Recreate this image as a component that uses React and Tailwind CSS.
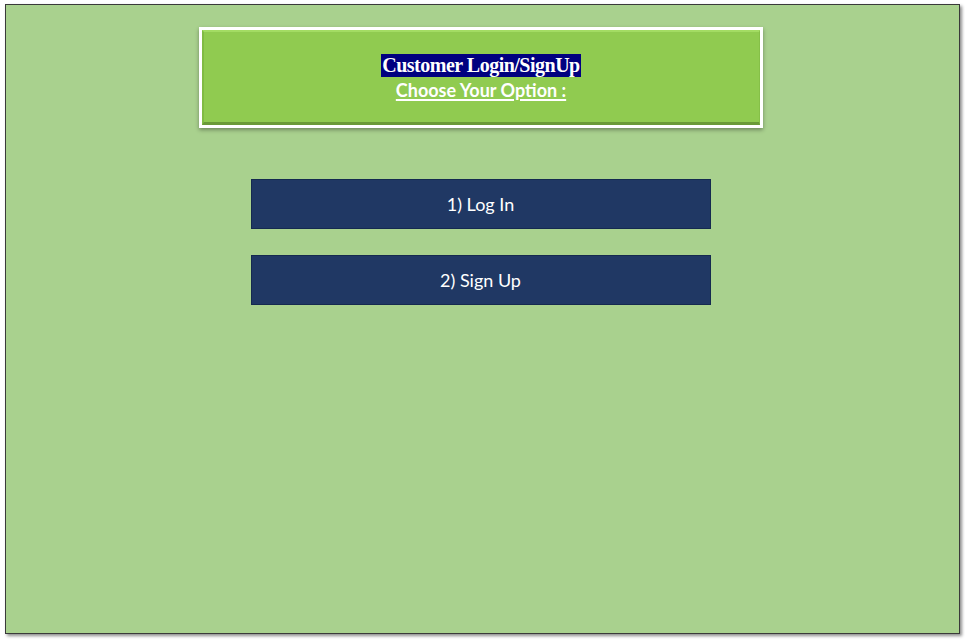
export default function App() {
  return (
    <div className="w-[965px] h-[640px] bg-white pt-[4px] pl-[5px]">
      <div className="w-[955px] h-[630px] bg-[#a9d18e] border border-[#3a3a3a] shadow-[2px_2px_3px_rgba(0,0,0,0.45)] flex flex-col items-center pr-[4px]">
        <div className="mt-[22px] w-[564px] h-[101px] border-[3px] border-white bg-white shadow-[0_2px_4px_rgba(0,0,0,0.35)]">
          <div className="h-full w-full bg-[#90cb50] border-t-[2px] border-t-[#a3dc63] border-l-[2px] border-l-[#80bb43] border-r border-r-[#86c048] border-b-[3px] border-b-[#6a9a38] flex flex-col items-center pt-[22px]">
            <span
              className="bg-[#000080] text-white font-bold text-[20px] leading-[23px] px-[1px] tracking-[-0.5px]"
              style={{ fontFamily: '"Liberation Serif", serif' }}
            >
              Customer Login/SignUp
            </span>
            <span
              className="mt-[2px] text-white font-bold text-[18px] leading-[22px] underline underline-offset-2 decoration-[1.5px]"
              style={{ fontFamily: 'Lato, "Open Sans", sans-serif' }}
            >
              Choose Your Option :
            </span>
          </div>
        </div>

        <div className="mt-[51px] flex flex-col gap-[26px]" style={{ fontFamily: 'Lato, "Open Sans", sans-serif' }}>
          {["1) Log In", "2) Sign Up"].map((label) => (
            <button
              key={label}
              className="w-[460px] h-[50px] bg-[#203864] border border-[#152a4f] text-white text-[18px] flex items-center justify-center"
            >
              {label}
            </button>
          ))}
        </div>
      </div>
    </div>
  );
}
